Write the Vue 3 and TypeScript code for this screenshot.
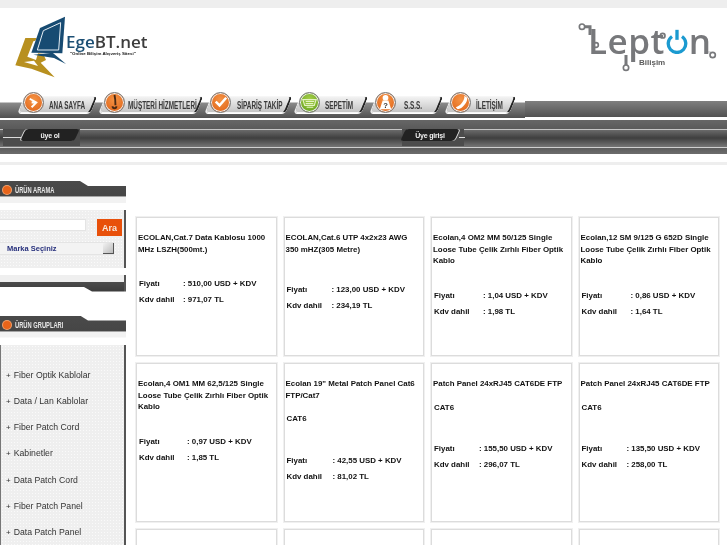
<template>
  <div class="page">
    <div class="top-strip"></div>

    <header class="header">
      <div class="egebt">
        <svg class="egebt__mark" viewBox="0 0 435 216" aria-hidden="true">
          <path d="M46 84 L80 84 L76 92 L70 94 L52 140 L78 150 L84 130 L100 132 L108 150 L92 158 L134 202 L64 176 L16 166 Z" fill="#b8901f" />
          <path d="M42 156 L72 152 L84 168 Z" fill="#fff" />
          <path d="M165 20 L157 130 L64 128 L90 54 Z" fill="#174b72" />
          <path d="M152 38 L146 120 L82 120 L100 62 Z" fill="none" stroke="#e6eef4" stroke-width="3" />
          <path d="M70 134 L128 128 L168 162 L132 144 Z" fill="#174b72" />
        </svg>
        <div class="egebt__name"><span class="egebt__ege">Ege</span>BT.net</div>
        <div class="egebt__tag">"Online Bilişim Alışveriş Sitesi"</div>
      </div>

      <div class="lepton">
        <svg class="lepton__traces" viewBox="0 0 450 180" aria-hidden="true">
          <path d="M38 35 H54 V60 M162 120 V150 M412 110 V112" fill="none" stroke="#77787b" stroke-width="9" />
          <g fill="#fff" stroke="#77787b" stroke-width="5">
            <circle cx="30" cy="35" r="8" />
            <circle cx="72" cy="90" r="7" />
            <circle cx="272" cy="62" r="7" />
            <circle cx="162" cy="158" r="8" />
            <circle cx="422" cy="120" r="8" />
          </g>
        </svg>
        <div class="lepton__word">
          <span>Lept</span>
          <svg class="lepton__power" viewBox="0 0 26 30" aria-hidden="true">
            <path d="M7 9 A10.5 10.5 0 1 0 19 9" fill="none" stroke="#1b9ad0" stroke-width="4" />
            <path d="M13 1 V13" fill="none" stroke="#1b9ad0" stroke-width="4" />
          </svg>
          <span>n</span>
        </div>
        <div class="lepton__sub">Bilişim</div>
      </div>
    </header>

    <nav class="nav">
      <div class="nav__tabs">
        <a v-for="tab in tabs" :key="tab.label" class="tab" :style="{ width: tab.width + 'px' }">
          <span class="tab__body"></span>
          <span class="tab__icon" :class="{ 'tab__icon--green': tab.icon === 'cart' }">
            <svg viewBox="0 0 20 20" aria-hidden="true">
              <path v-if="tab.icon === 'home'" d="M6 6 L13 10 L8 15 M8 10 H12" fill="none" stroke="#fff" stroke-width="2" />
              <path v-else-if="tab.icon === 'mic'" d="M10 2 C11 6 11 10 11 13 M8 14 A2 2 0 0 0 12 14" fill="none" stroke="#4a2a14" stroke-width="2" />
              <path v-else-if="tab.icon === 'check'" d="M5 9 L9 13 L16 5" fill="none" stroke="#fff" stroke-width="2.6" />
              <path v-else-if="tab.icon === 'cart'" d="M3 7 H17 L15 13 H5 Z M7 15 H14 M6 9 H15 M6 11 H14" fill="none" stroke="#e4f3c2" stroke-width="1.2" />
              <g v-else-if="tab.icon === 'help'">
                <circle cx="10" cy="5" r="3" fill="#fff" />
                <path d="M4 17 L7 8 H13 L16 17 Z" fill="#fff" />
                <text x="10" y="16" class="tab__q">?</text>
              </g>
              <path v-else d="M14 3 C15 7 10 14 5 15 L7 17 C12 17 18 9 17 5 Z" fill="#fff" />
            </svg>
          </span>
          <span class="tab__label" :style="{ marginLeft: tab.offset + 'px' }">{{ tab.label }}</span>
        </a>
      </div>
      <div class="nav__rest"></div>
    </nav>

    <div class="subbar">
      <div class="subbar__patch subbar__patch--left"></div>
      <div class="subbar__patch subbar__patch--right"></div>
      <i class="subbar__wire subbar__wire--left"></i>
      <i class="subbar__wire subbar__wire--right"></i>
      <a class="pill pill--left"><span>üye ol</span></a>
      <a class="pill pill--right"><span>Üye girişi</span></a>
    </div>

    <div class="divider"></div>

    <main class="main">
      <aside class="side">
        <section class="box box--search">
          <div class="box__head">
            <span class="box__dot"></span>
            <span class="box__title">ÜRÜN ARAMA</span>
          </div>
          <div class="box__body search">
            <div class="search__row">
              <div class="search__input"></div>
              <button type="button" class="search__btn">Ara</button>
            </div>
            <div class="search__select">
              <span>Marka Seçiniz</span>
              <i class="search__arrow"></i>
            </div>
          </div>
          <div class="box__foot"></div>
        </section>

        <section class="box box--groups">
          <div class="box__head">
            <span class="box__dot"></span>
            <span class="box__title">ÜRÜN GRUPLARI</span>
          </div>
          <div class="box__body">
            <ul class="groups">
              <li v-for="group in groups" :key="group"><small>+</small>{{ group }}</li>
            </ul>
          </div>
        </section>
      </aside>

      <section class="grid">
        <article v-for="(item, idx) in products" :key="idx" class="card">
          <template v-if="item.title">
            <h3 class="card__title">{{ item.title }}</h3>
            <p v-if="item.sub" class="card__sub">{{ item.sub }}</p>
            <div class="card__price" :style="{ marginTop: item.gap + 'px' }">
              <div class="card__row">
                <span :style="{ width: item.labelWidth + 'px' }">Fiyatı</span>
                <span>: {{ item.price }} USD + KDV</span>
              </div>
              <div class="card__row">
                <span :style="{ width: item.labelWidth + 'px' }">Kdv dahil</span>
                <span>: {{ item.total }} TL</span>
              </div>
            </div>
          </template>
        </article>
      </section>
    </main>
  </div>
</template>

<script setup lang="ts">
interface Product {
  title?: string
  sub?: string
  price?: string
  total?: string
  gap?: number
  labelWidth?: number
}

const tabs = [
  { label: 'ANA SAYFA', icon: 'home', width: 81, offset: 5 },
  { label: 'MÜŞTERİ HİZMETLERİ', icon: 'mic', width: 106, offset: 3 },
  { label: 'SİPARİŞ TAKİP', icon: 'check', width: 89, offset: 6 },
  { label: 'SEPETİM', icon: 'cart', width: 76, offset: 5 },
  { label: 'S.S.S.', icon: 'help', width: 75, offset: 8 },
  { label: 'İLETİŞİM', icon: 'phone', width: 73, offset: 5 },
]

const groups = [
  'Fiber Optik Kablolar',
  'Data / Lan Kablolar',
  'Fiber Patch Cord',
  'Kabinetler',
  'Data Patch Cord',
  'Fiber Patch Panel',
  'Data Patch Panel',
]

const products: Product[] = [
  { title: 'ECOLAN,Cat.7 Data Kablosu 1000 MHz LSZH(500mt.)', price: '510,00', total: '971,07', gap: 20, labelWidth: 44 },
  { title: 'ECOLAN,Cat.6 UTP 4x2x23 AWG 350 mHZ(305 Metre)', price: '123,00', total: '234,19', gap: 26, labelWidth: 45 },
  { title: 'Ecolan,4 OM2 MM 50/125 Single Loose Tube Çelik Zırhlı Fiber Optik Kablo', price: '1,04', total: '1,98', gap: 20, labelWidth: 49 },
  { title: 'Ecolan,12 SM 9/125 G 652D Single Loose Tube Çelik Zırhlı Fiber Optik Kablo', price: '0,86', total: '1,64', gap: 20, labelWidth: 49 },
  { title: 'Ecolan,4 OM1 MM 62,5/125 Single Loose Tube Çelik Zırhlı Fiber Optik Kablo', price: '0,97', total: '1,85', gap: 20, labelWidth: 48 },
  { title: 'Ecolan 19" Metal Patch Panel Cat6 FTP/Cat7', sub: 'CAT6', price: '42,55', total: '81,02', gap: 27, labelWidth: 46 },
  { title: 'Patch Panel 24xRJ45 CAT6DE FTP', sub: 'CAT6', price: '155,50', total: '296,07', gap: 27, labelWidth: 45 },
  { title: 'Patch Panel 24xRJ45 CAT6DE FTP', sub: 'CAT6', price: '135,50', total: '258,00', gap: 27, labelWidth: 45 },
  {},
  {},
  {},
  {},
]
</script>

<style>
html,
body {
  margin: 0;
  overflow: hidden;
  background: #fff;
}
</style>

<style scoped>
.page {
  width: 727px;
  height: 545px;
  overflow: hidden;
  background: #fff;
  font-family: "Liberation Sans", Arial, sans-serif;
  color: #111;
  filter: blur(0.3px);
}

.top-strip {
  height: 8px;
  background: #eeeeee;
}

.header {
  height: 85px;
  display: flex;
  justify-content: space-between;
  align-items: flex-start;
}

.egebt {
  position: relative;
  width: 145px;
  height: 72px;
  margin: 2px 0 0 10px;
}

.egebt__mark {
  width: 145px;
  height: 72px;
  display: block;
}

.egebt__name {
  position: absolute;
  left: 56px;
  top: 22px;
  font-family: "Open Sans", "Noto Sans", sans-serif;
  font-size: 17px;
  font-weight: 600;
  line-height: 19px;
  color: #3d3d3d;
  white-space: nowrap;
}

.egebt__ege {
  color: #1c4f74;
}

.egebt__tag {
  position: absolute;
  left: 60px;
  top: 41px;
  font-size: 4.4px;
  font-weight: 700;
  line-height: 6px;
  white-space: nowrap;
  color: #111;
}

.lepton {
  position: relative;
  width: 150px;
  height: 60px;
  margin: 7px 5px 0 0;
}

.lepton__traces {
  position: absolute;
  inset: 0;
  width: 150px;
  height: 60px;
}

.lepton__word {
  position: absolute;
  left: 16px;
  top: 8px;
  display: flex;
  align-items: baseline;
  gap: 1px;
  font-family: "Open Sans", sans-serif;
  font-size: 35px;
  font-weight: 600;
  line-height: 36px;
  letter-spacing: 0.5px;
  color: #77787b;
}

.lepton__power {
  width: 22px;
  height: 25px;
  align-self: flex-end;
  margin-bottom: 5px;
}

.lepton__sub {
  position: absolute;
  left: 67px;
  top: 44px;
  font-size: 8px;
  font-weight: 700;
  line-height: 8px;
  color: #5b5b5b;
}

.nav {
  height: 27px;
  display: flex;
  align-items: flex-start;
}

.nav__tabs {
  width: 525px;
  height: 25px;
  padding: 3px 0 0 20px;
  box-sizing: border-box;
  display: flex;
  background: linear-gradient(#fff 0, #fff 9px, #8a8a8a 10px, #505050 100%);
}

.nav__rest {
  flex: 1;
  height: 16px;
  margin-top: 8px;
  background: linear-gradient(#7f7f7f, #525252);
}

.tab {
  position: relative;
  height: 17px;
  display: flex;
  align-items: center;
  padding-left: 3px;
  box-sizing: border-box;
}

.tab__body {
  position: absolute;
  left: 1px;
  right: 7px;
  top: 0;
  bottom: 0;
  box-sizing: border-box;
  border: 1px solid #f6f6f6;
  border-right: 2px solid #222;
  border-radius: 4px;
  background: linear-gradient(#f2f2f2, #c4c4c4);
  transform: skewX(-22deg);
  box-shadow: 0 1px 0 #fff;
}

.tab__icon {
  position: relative;
  flex: none;
  width: 21px;
  height: 21px;
  margin-top: -4px;
  box-sizing: border-box;
  border: 1px solid #777;
  border-radius: 50%;
  background: radial-gradient(circle at 50% 35%, #f59344, #dd5f14);
  box-shadow: inset 0 0 0 1px #eee;
}

.tab__icon--green {
  background: radial-gradient(circle at 50% 35%, #a7d04a, #5c9a16);
}

.tab__icon svg {
  display: block;
  width: 19px;
  height: 19px;
}

.tab__q {
  font-size: 8px;
  font-weight: 700;
  text-anchor: middle;
  fill: #333;
}

.tab__label {
  position: relative;
  display: inline-block;
  font-size: 11px;
  font-weight: 700;
  white-space: nowrap;
  color: #3a3a3a;
  transform: scaleX(0.58);
  transform-origin: left center;
}

.subbar {
  position: relative;
  height: 34px;
  background: linear-gradient(
    #666 0,
    #5a5a5a 9px,
    #c4c4c4 9px,
    #c4c4c4 10px,
    #6a6a6a 10px,
    #3f3f3f 18px,
    #757575 27px,
    #cfcfcf 27px,
    #cfcfcf 28px,
    #5d5d5d 28px,
    #6c6c6c 100%
  );
}

.subbar__patch {
  position: absolute;
  top: 9px;
  height: 17px;
  background: #4c4c4c;
}

.subbar__patch--left {
  left: 3px;
  width: 77px;
}

.subbar__patch--right {
  left: 402px;
  width: 62px;
}

.subbar__wire {
  position: absolute;
  top: 17px;
  height: 1px;
  background: #ddd;
}

.subbar__wire--left {
  left: 3px;
  width: 18px;
}

.subbar__wire--right {
  left: 459px;
  width: 6px;
}

.pill {
  position: absolute;
  top: 9px;
  height: 12px;
  display: flex;
  align-items: center;
  justify-content: center;
  box-sizing: border-box;
  font-size: 7px;
  font-weight: 700;
  letter-spacing: -0.2px;
  color: #f2f2f2;
}

.pill::before {
  content: "";
  position: absolute;
  inset: 0;
  background: #222;
  border-radius: 3px;
  transform: skewX(-25deg);
  box-shadow: -1px 0 0 #ddd;
}

.pill span {
  position: relative;
}

.pill--left {
  left: 23px;
  width: 54px;
}

.pill--right {
  left: 403px;
  width: 54px;
}

.pill--right::before {
  box-shadow: 1px 0 0 #ddd;
}

.divider {
  height: 3px;
  margin-top: 8px;
  background: #eeeeee;
}

.main {
  display: flex;
  align-items: flex-start;
  margin-top: 16px;
}

.side {
  flex: none;
  width: 126px;
}

.box__head {
  position: relative;
  height: 22px;
  display: flex;
  align-items: flex-start;
  gap: 4px;
  padding: 5px 0 0 3px;
  box-sizing: border-box;
  background: linear-gradient(#4a4a4a 0, #464646 15px, #a5a5a5 15px, #a5a5a5 16px, #f2f2f2 16px);
  clip-path: polygon(0 0, 80px 0, 88px 5px, 100% 5px, 100% 100%, 0 100%);
}

.box__dot {
  flex: none;
  width: 8px;
  height: 8px;
  border-radius: 50%;
  background: #e8641a;
  box-shadow: 0 0 0 1px #f3a06a;
}

.box__title {
  display: inline-block;
  font-size: 9px;
  font-weight: 700;
  line-height: 9px;
  white-space: nowrap;
  color: #e6e6e6;
  transform: scaleX(0.64);
  transform-origin: left center;
}

.box__body {
  margin-top: 7px;
  box-sizing: border-box;
  background-color: #efefef;
  background-image: radial-gradient(#fafafa 0.6px, transparent 0.8px);
  background-size: 3px 3px;
  border-right: 2px solid #555;
  border-left: 1px solid #777;
}

.search {
  height: 58px;
  padding-top: 9px;
  border-left: none;
}

.search__row {
  display: flex;
  align-items: flex-start;
  gap: 11px;
}

.search__input {
  width: 86px;
  height: 12px;
  background: #fff;
  border: 1px solid #e4e4e4;
  border-left: none;
  box-sizing: border-box;
}

.search__btn {
  width: 25px;
  height: 17px;
  padding: 0;
  border: none;
  background: #e8500a;
  color: #f7e7dc;
  font: 700 9px "Liberation Sans", sans-serif;
}

.search__select {
  height: 13px;
  width: 114px;
  margin-top: 6px;
  padding-left: 7px;
  box-sizing: border-box;
  display: flex;
  align-items: center;
  justify-content: space-between;
  background: #f3f3f3;
  border-top: 1px solid #e4e4e4;
  border-bottom: 1px solid #e4e4e4;
  font-size: 7.5px;
  font-weight: 700;
  color: #27307c;
}

.search__arrow {
  width: 11px;
  height: 11px;
  background: linear-gradient(135deg, #f2f2f2, #bcbcbc);
  border-right: 1px solid #555;
  border-bottom: 1px solid #555;
  box-sizing: border-box;
}

.box__foot {
  height: 16.5px;
  margin-top: 7px;
  border-right: 2px solid #555;
  box-sizing: border-box;
  background: linear-gradient(#efefef 0, #efefef 7px, #4c4c4c 7px, #3c3c3c 100%);
  clip-path: polygon(0 0, 100% 0, 100% 100%, 92px 100%, 84px 12px, 0 12px);
}

.box--groups {
  margin-top: 24px;
}

.groups {
  list-style: none;
  margin: 0;
  padding: 17px 0 0 5px;
}

.groups li {
  height: 26.3px;
  font-size: 8.7px;
  line-height: 26.3px;
  color: #333;
  white-space: nowrap;
}

.groups small {
  font-size: 8px;
  margin-right: 3px;
}

.grid {
  flex: none;
  width: 583px;
  margin: 36px 0 0 10px;
  display: grid;
  grid-template-columns: repeat(4, 140.5px);
  grid-template-rows: 139px 159px 150px;
  gap: 7px;
}

.card {
  box-sizing: border-box;
  padding: 14px 1px 0 1px;
  background: #fff;
  border: 1px solid #dcdcdc;
  box-shadow: 0 0 0 1px #f0f0f0;
}

.card__title {
  margin: 0;
  font-size: 7.9px;
  font-weight: 700;
  line-height: 11.6px;
  color: #111;
}

.card__sub {
  margin: 12px 0 0 1px;
  font-size: 7.9px;
  font-weight: 700;
  line-height: 11.6px;
}

.card__price {
  padding-left: 1px;
}

.card__row {
  display: flex;
  height: 16.5px;
  align-items: center;
  font-size: 7.9px;
  font-weight: 700;
  white-space: nowrap;
}
</style>
